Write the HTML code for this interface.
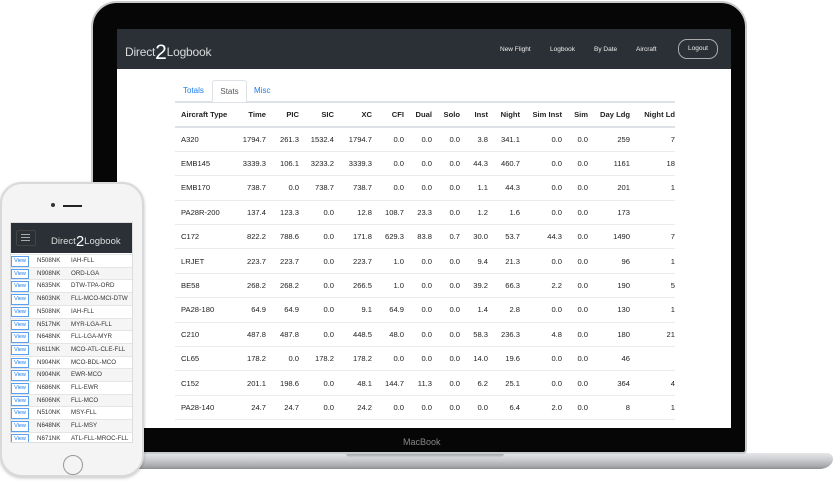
<!DOCTYPE html>
<html><head><meta charset="utf-8"><style>
*{box-sizing:border-box;margin:0;padding:0}
body{width:833px;height:481px;background:#fff;position:relative;overflow:hidden;font-family:"Liberation Sans",sans-serif}
.abs{position:absolute}
#base{left:96px;top:453px;width:737px;height:16px;border-radius:2px 6px 14px 14px/2px 6px 10px 10px;background:linear-gradient(#e6e7e9,#c9cacd 45%,#a5a6aa 85%,#8d8e92)}
#notch{left:346px;top:453px;width:158px;height:5px;background:linear-gradient(#9a9b9e,#d8d9db);border-radius:0 0 6px 6px}
#lid{left:91px;top:1px;width:656px;height:453px;background:#060606;border-radius:26px 26px 4px 4px;border:2px solid #c9cacc}
#screen{left:117px;top:29px;width:614px;height:399px;background:#fff;overflow:hidden}
#nav{left:0;top:0;width:614px;height:40px;background:#2b3036}
.brand{color:#d8dadc;font-size:12px;top:9px;left:8px;letter-spacing:-.2px}
.brand b{font-weight:normal;font-size:21px;color:#fff;position:relative;top:3px}
.nl{color:#eee;font-size:6.5px;top:17px}
#logout{left:561px;top:10px;width:40px;height:20px;border:1px solid #aaa;border-radius:9px;color:#eee;font-size:6.5px;text-align:center;line-height:18px}
.tab{font-size:8px;top:57px;color:#1a7cf0}
#stab{left:95px;top:51px;width:35px;height:22px;border:1px solid #dee2e6;border-bottom:none;background:#fff;color:#555;font-size:8px;text-align:center;line-height:21px;border-radius:3px 3px 0 0}
#tbl{left:58px;top:72px;width:500px;overflow:hidden}
table{border-collapse:collapse;table-layout:fixed;width:500px;font-size:7.6px;color:#222}
td,th{text-align:right;height:24.4px;border-top:1px solid #e9ecef;white-space:nowrap;overflow:hidden;padding:0}
th{font-weight:bold;border-top:2px solid #dee2e6;border-bottom:2px solid #dee2e6;height:25px}
td:first-child,th:first-child{text-align:left;padding-left:6px}
tr:last-child td{border-bottom:1px solid #e9ecef}
#mac{left:403px;top:437px;color:#888;font-size:9px}
#phone{left:0;top:182px;width:144px;height:295px;border-radius:22px;background:#f4f4f5;border:2px solid #d9d9db;box-shadow:0 1px 3px rgba(0,0,0,.25)}
#pscreen{left:10px;top:222px;width:123px;height:221px;background:#fff;overflow:hidden;border:1px solid #ddd}
#pnav{left:0;top:0;width:123px;height:30px;background:#2b3036}
.prow{position:absolute;left:0;width:123px;height:12.7px;font-size:6.2px;color:#333;line-height:12.7px;border-top:1px solid #e5e5e5}
.prow:nth-child(even){background:#f5f5f5}
.v{position:absolute;left:0;top:1px;width:18px;height:10.5px;border:1px solid #5aa0f0;color:#1a7cf0;text-align:center;line-height:9px;font-size:5.5px;background:#fff}
.n{position:absolute;left:26px}.r{position:absolute;left:60px}
</style></head><body>
<div id="base" class="abs"></div><div id="notch" class="abs"></div>
<div id="lid" class="abs"></div>
<div id="mac" class="abs">MacBook</div>
<div id="screen" class="abs">
 <div id="nav" class="abs">
  <div class="abs brand">Direct<b>2</b>Logbook</div>
  <div class="abs nl" style="left:383px">New Flight</div>
  <div class="abs nl" style="left:433px">Logbook</div>
  <div class="abs nl" style="left:477px">By Date</div>
  <div class="abs nl" style="left:519px">Aircraft</div>
  <div id="logout" class="abs">Logout</div>
 </div>
 <div class="abs tab" style="left:66px">Totals</div>
 <div class="abs tab" style="left:137px">Misc</div>
 <div id="tbl" class="abs">
 <table>
 <colgroup><col style="width:61px"><col style="width:30px"><col style="width:33px"><col style="width:35px"><col style="width:38px"><col style="width:32px"><col style="width:28px"><col style="width:28px"><col style="width:28px"><col style="width:32px"><col style="width:42px"><col style="width:26px"><col style="width:42px"><col style="width:45px"></colgroup>
 <tr><th>Aircraft Type</th><th>Time</th><th>PIC</th><th>SIC</th><th>XC</th><th>CFI</th><th>Dual</th><th>Solo</th><th>Inst</th><th>Night</th><th>Sim Inst</th><th>Sim</th><th>Day Ldg</th><th>Night Ld</th></tr>
 <tr><td>A320</td><td>1794.7</td><td>261.3</td><td>1532.4</td><td>1794.7</td><td>0.0</td><td>0.0</td><td>0.0</td><td>3.8</td><td>341.1</td><td>0.0</td><td>0.0</td><td>259</td><td>7</td></tr>
 <tr><td>EMB145</td><td>3339.3</td><td>106.1</td><td>3233.2</td><td>3339.3</td><td>0.0</td><td>0.0</td><td>0.0</td><td>44.3</td><td>460.7</td><td>0.0</td><td>0.0</td><td>1161</td><td>18</td></tr>
 <tr><td>EMB170</td><td>738.7</td><td>0.0</td><td>738.7</td><td>738.7</td><td>0.0</td><td>0.0</td><td>0.0</td><td>1.1</td><td>44.3</td><td>0.0</td><td>0.0</td><td>201</td><td>1</td></tr>
 <tr><td>PA28R-200</td><td>137.4</td><td>123.3</td><td>0.0</td><td>12.8</td><td>108.7</td><td>23.3</td><td>0.0</td><td>1.2</td><td>1.6</td><td>0.0</td><td>0.0</td><td>173</td><td></td></tr>
 <tr><td>C172</td><td>822.2</td><td>788.6</td><td>0.0</td><td>171.8</td><td>629.3</td><td>83.8</td><td>0.7</td><td>30.0</td><td>53.7</td><td>44.3</td><td>0.0</td><td>1490</td><td>7</td></tr>
 <tr><td>LRJET</td><td>223.7</td><td>223.7</td><td>0.0</td><td>223.7</td><td>1.0</td><td>0.0</td><td>0.0</td><td>9.4</td><td>21.3</td><td>0.0</td><td>0.0</td><td>96</td><td>1</td></tr>
 <tr><td>BE58</td><td>268.2</td><td>268.2</td><td>0.0</td><td>266.5</td><td>1.0</td><td>0.0</td><td>0.0</td><td>39.2</td><td>66.3</td><td>2.2</td><td>0.0</td><td>190</td><td>5</td></tr>
 <tr><td>PA28-180</td><td>64.9</td><td>64.9</td><td>0.0</td><td>9.1</td><td>64.9</td><td>0.0</td><td>0.0</td><td>1.4</td><td>2.8</td><td>0.0</td><td>0.0</td><td>130</td><td>1</td></tr>
 <tr><td>C210</td><td>487.8</td><td>487.8</td><td>0.0</td><td>448.5</td><td>48.0</td><td>0.0</td><td>0.0</td><td>58.3</td><td>236.3</td><td>4.8</td><td>0.0</td><td>180</td><td>21</td></tr>
 <tr><td>CL65</td><td>178.2</td><td>0.0</td><td>178.2</td><td>178.2</td><td>0.0</td><td>0.0</td><td>0.0</td><td>14.0</td><td>19.6</td><td>0.0</td><td>0.0</td><td>46</td><td></td></tr>
 <tr><td>C152</td><td>201.1</td><td>198.6</td><td>0.0</td><td>48.1</td><td>144.7</td><td>11.3</td><td>0.0</td><td>6.2</td><td>25.1</td><td>0.0</td><td>0.0</td><td>364</td><td>4</td></tr>
 <tr><td>PA28-140</td><td>24.7</td><td>24.7</td><td>0.0</td><td>24.2</td><td>0.0</td><td>0.0</td><td>0.0</td><td>0.0</td><td>6.4</td><td>2.0</td><td>0.0</td><td>8</td><td>1</td></tr>
 </table></div>
 <div id="stab" class="abs">Stats</div>
</div>
<div id="phone" class="abs"></div>
<div class="abs" style="left:51px;top:203px;width:4px;height:4px;border-radius:50%;background:#333"></div>
<div class="abs" style="left:63px;top:205px;width:19px;height:2px;background:#222"></div>
<div class="abs" style="left:63px;top:455px;width:20px;height:20px;border-radius:50%;border:1.5px solid #999"></div>
<div id="pscreen" class="abs">
 <div id="pnav" class="abs">
  <div class="abs" style="left:5px;top:7px;width:20px;height:16px;border:1px solid #444;border-radius:2px"></div>
  <div class="abs" style="left:10px;top:11px;width:9px;height:1px;background:#aaa;box-shadow:0 3px 0 #aaa,0 6px 0 #aaa"></div>
  <div class="abs" style="left:40px;top:8px;color:#ddd;font-size:9.5px;white-space:nowrap">Direct<span style="font-size:15px;color:#fff;position:relative;top:2px">2</span>Logbook</div>
 </div>
 <div class="abs" style="left:0;top:31px;width:123px;height:190px">
  <div class="prow" style="top:0"><span class="v">View</span><span class="n">N508NK</span><span class="r">IAH-FLL</span></div>
  <div class="prow" style="top:12.7px"><span class="v">View</span><span class="n">N908NK</span><span class="r">ORD-LGA</span></div>
  <div class="prow" style="top:25.4px"><span class="v">View</span><span class="n">N635NK</span><span class="r">DTW-TPA-ORD</span></div>
  <div class="prow" style="top:38.1px"><span class="v">View</span><span class="n">N603NK</span><span class="r">FLL-MCO-MCI-DTW</span></div>
  <div class="prow" style="top:50.8px"><span class="v">View</span><span class="n">N508NK</span><span class="r">IAH-FLL</span></div>
  <div class="prow" style="top:63.5px"><span class="v">View</span><span class="n">N517NK</span><span class="r">MYR-LGA-FLL</span></div>
  <div class="prow" style="top:76.2px"><span class="v">View</span><span class="n">N648NK</span><span class="r">FLL-LGA-MYR</span></div>
  <div class="prow" style="top:88.9px"><span class="v">View</span><span class="n">N611NK</span><span class="r">MCO-ATL-CLE-FLL</span></div>
  <div class="prow" style="top:101.6px"><span class="v">View</span><span class="n">N904NK</span><span class="r">MCO-BDL-MCO</span></div>
  <div class="prow" style="top:114.3px"><span class="v">View</span><span class="n">N904NK</span><span class="r">EWR-MCO</span></div>
  <div class="prow" style="top:127px"><span class="v">View</span><span class="n">N686NK</span><span class="r">FLL-EWR</span></div>
  <div class="prow" style="top:139.7px"><span class="v">View</span><span class="n">N606NK</span><span class="r">FLL-MCO</span></div>
  <div class="prow" style="top:152.4px"><span class="v">View</span><span class="n">N510NK</span><span class="r">MSY-FLL</span></div>
  <div class="prow" style="top:165.1px"><span class="v">View</span><span class="n">N648NK</span><span class="r">FLL-MSY</span></div>
  <div class="prow" style="top:177.8px"><span class="v">View</span><span class="n">N671NK</span><span class="r">ATL-FLL-MROC-FLL</span></div>
 </div>
</div>
</body></html>
